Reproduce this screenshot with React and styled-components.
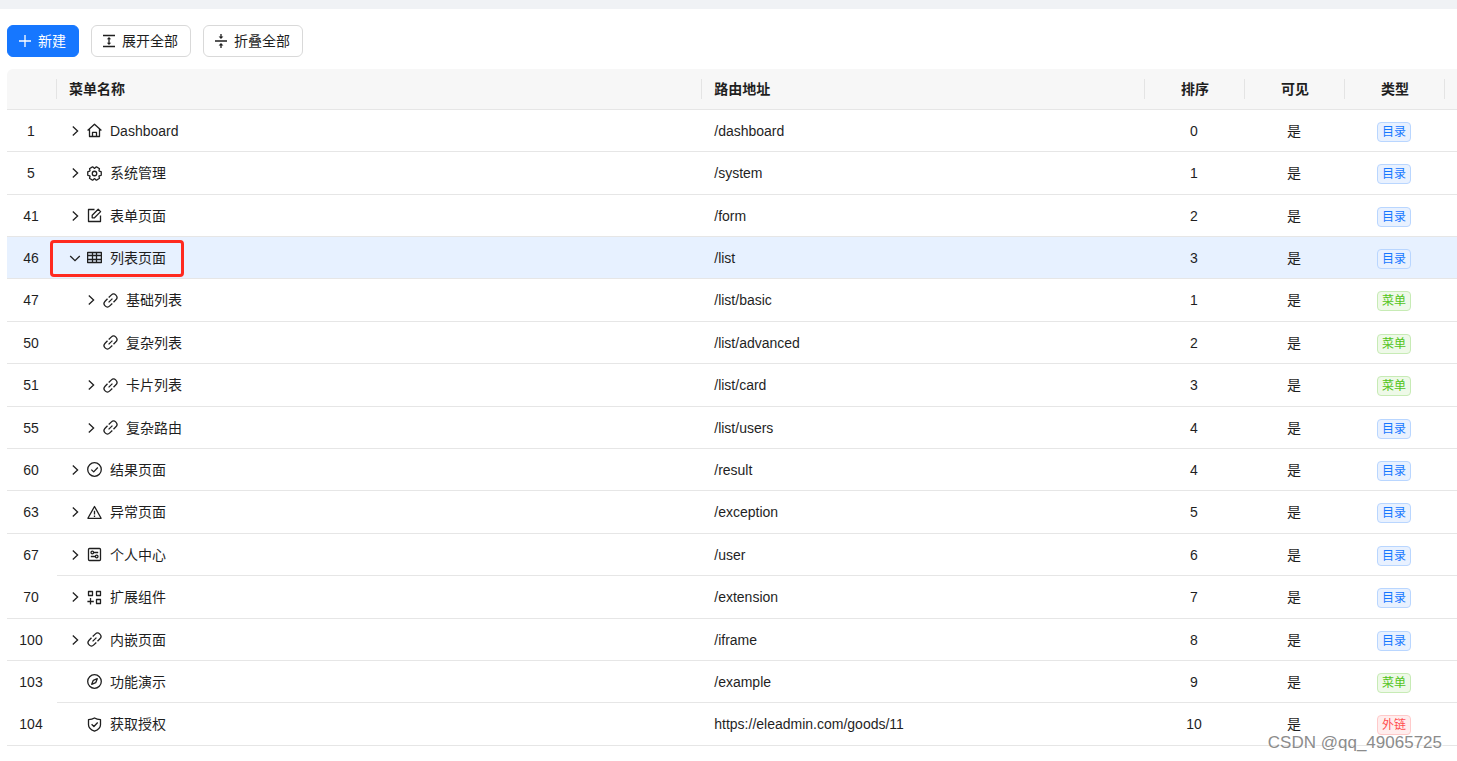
import styled, { createGlobalStyle, css } from "styled-components";

const menus = [
  { id: 1, icon: "home", title: "Dashboard", path: "/dashboard", sort: 0, type: "dir", arrow: "right" },
  { id: 5, icon: "setting", title: "系统管理", path: "/system", sort: 1, type: "dir", arrow: "right" },
  { id: 41, icon: "edit", title: "表单页面", path: "/form", sort: 2, type: "dir", arrow: "right" },
  { id: 46, icon: "table", title: "列表页面", path: "/list", sort: 3, type: "dir", arrow: "down", active: true },
  { id: 47, icon: "link", title: "基础列表", path: "/list/basic", sort: 1, type: "menu", arrow: "right", level: 1 },
  { id: 50, icon: "link", title: "复杂列表", path: "/list/advanced", sort: 2, type: "menu", level: 1 },
  { id: 51, icon: "link", title: "卡片列表", path: "/list/card", sort: 3, type: "menu", arrow: "right", level: 1 },
  { id: 55, icon: "link", title: "复杂路由", path: "/list/users", sort: 4, type: "dir", arrow: "right", level: 1 },
  { id: 60, icon: "check", title: "结果页面", path: "/result", sort: 4, type: "dir", arrow: "right" },
  { id: 63, icon: "warning", title: "异常页面", path: "/exception", sort: 5, type: "dir", arrow: "right" },
  { id: 67, icon: "control", title: "个人中心", path: "/user", sort: 6, type: "dir", arrow: "right", noLine: true },
  { id: 70, icon: "apps", title: "扩展组件", path: "/extension", sort: 7, type: "dir", arrow: "right" },
  { id: 100, icon: "link", title: "内嵌页面", path: "/iframe", sort: 8, type: "dir", arrow: "right" },
  { id: 103, icon: "compass", title: "功能演示", path: "/example", sort: 9, type: "menu", noLine: true },
  { id: 104, icon: "shield", title: "获取授权", path: "https://eleadmin.com/goods/11", sort: 10, type: "outer" },
];

const types = {
  dir: { text: "目录", color: "#1677ff", bg: "#e8f1ff", border: "#b9d6ff" },
  menu: { text: "菜单", color: "#52c41a", bg: "#eef9e8", border: "#c7ebb5" },
  outer: { text: "外链", color: "#ff4d4f", bg: "#ffeded", border: "#ffcaca" },
};

const icons = {
  home: (
    <>
      <path d="M.6 7.6 7.5 1.2l6.900 6.400M2.500 6v7.500h10V6" />
      <path d="M5.500 13.500V9.400h4v4.100" />
    </>
  ),
  edit: (
    <>
      <path d="M7.500 1.500h-6v12h12v-6" />
      <path d="M5.200 9.800V7.300l6-6 2.400 2.300-6.100 6.200z" />
    </>
  ),
  table: (
    <path d="M.6 2.500h13.800v10H.6zM.6 5.500h13.800M.6 9.500h13.800M5.500 2.500v10M9.500 2.500v10" />
  ),
  link: (
    <>
      <path d="M5.700 4.500 8.200 2.100a3.300 3.300 0 0 1 4.700 4.700l-2.400 2.500" />
      <path d="M4.500 5.700 2.100 8.200a3.300 3.300 0 0 0 4.700 4.700l2.500-2.400" />
      <path d="m5.600 9.400 3.800-3.800" />
    </>
  ),
  check: (
    <>
      <circle cx="7.500" cy="7.500" r="6.800" />
      <path d="m4.300 7.600 2.400 2.300 4.100-4.400" />
    </>
  ),
  warning: (
    <>
      <path d="M7.500 1.500.9 13.300h13.200z" />
      <path d="M7.500 5.800v3.600M7.500 10.600v1.300" />
    </>
  ),
  control: (
    <>
      <rect x="1.500" y="1.500" width="12" height="12" rx="1" />
      <path d="M6.800 5.500h4.400M3.800 9.500h4.400" />
      <circle cx="5.300" cy="5.500" r="1.300" />
      <circle cx="9.700" cy="9.500" r="1.300" />
    </>
  ),
  apps: (
    <path d="M1.500 1.500h4v4h-4zM9.500 1.500h4v4h-4zM9.500 9.500h4v4h-4zM3.500 8v6.400M.4 11.500h6.400" />
  ),
  compass: (
    <>
      <circle cx="7.500" cy="7.500" r="6.800" />
      <path d="M10.300 4.700 8.700 8.700 4.700 10.300 6.300 6.300z" />
    </>
  ),
  shield: (
    <>
      <path d="M7.500 1C5.700 2.200 3.800 2.600 1.500 2.700v5c0 3.100 2.500 5 6 6.500 3.500-1.500 6-3.400 6-6.500v-5C11.200 2.600 9.300 2.200 7.500 1z" />
      <path d="m4.600 7.300 2.300 2.200 3.800-4" />
    </>
  ),
};

const MenuIcon = ({ name }) => {
  if (name === "setting") {
    return (
      <Icon viewBox="4 4 40 40" $stroke={3.4}>
        <path
          transform="rotate(30 24 24)"
          d="M18.797 6.732A1 1 0 0 1 19.760 6h8.480a1 1 0 0 1 .964.732l1.285 4.628a1 1 0 0 0 1.213.700l4.651-1.200a1 1 0 0 1 1.116.468l4.240 7.344a1 1 0 0 1-.153 1.200L38.193 23.300a1 1 0 0 0 0 1.402l3.364 3.427a1 1 0 0 1 .153 1.200l-4.240 7.344a1 1 0 0 1-1.116.468l-4.650-1.200a1 1 0 0 0-1.214.700l-1.285 4.628a1 1 0 0 1-.964.732h-8.480a1 1 0 0 1-.963-.732L17.510 36.640a1 1 0 0 0-1.213-.700l-4.650 1.200a1 1 0 0 1-1.116-.468l-4.240-7.344a1 1 0 0 1 .153-1.200L9.809 24.700a1 1 0 0 0 0-1.402l-3.364-3.427a1 1 0 0 1-.153-1.200l4.240-7.344a1 1 0 0 1 1.116-.468l4.650 1.200a1 1 0 0 0 1.213-.700z"
        />
        <circle cx="24" cy="24" r="6" />
      </Icon>
    );
  }
  return <Icon viewBox="0 0 15 15">{icons[name]}</Icon>;
};

const MenuRow = ({ item }) => {
  const type = types[item.type];
  return (
    <Row $active={item.active}>
      <Cell $center $noLine={item.noLine}>
        {item.id}
      </Cell>
      <Cell>
        <NameBox $level={item.level || 0}>
          {item.arrow ? (
            <ArrowButton
              type="button"
              aria-label={item.title}
              aria-expanded={item.arrow === "down"}
            >
              <svg width="12" height="12" viewBox="0 0 12 12">
                <path
                  d={item.arrow === "down" ? "m1.200 4 4.800 4.600L10.800 4" : "m3.800 1.500 4.800 4.500-4.800 4.500"}
                />
              </svg>
            </ArrowButton>
          ) : (
            <ArrowSpace />
          )}
          <MenuIcon name={item.icon} />
          <span>{item.title}</span>
          {item.active && <Mark />}
        </NameBox>
      </Cell>
      <Cell>{item.path}</Cell>
      <Cell $center>{item.sort}</Cell>
      <Cell $center>是</Cell>
      <Cell $center>
        <Tag $color={type.color} $bg={type.bg} $border={type.border}>
          {type.text}
        </Tag>
      </Cell>
      <Cell />
    </Row>
  );
};

const App = () => {
  return (
    <Page>
      <GlobalStyle />
      <Content>
        <Toolbar>
          <Button type="button" $primary>
            <svg width="14" height="14" viewBox="0 0 14 14">
              <path d="M7 1v12M1 7h12" />
            </svg>
            新建
          </Button>
          <Button type="button">
            <svg width="14" height="14" viewBox="0 0 14 14">
              <path d="M1 1.500h12M1 12.500h12M7 4v6" />
              <path d="M4.800 5.300 7 3l2.200 2.300zM4.800 8.700 7 11l2.200-2.300z" fill="currentColor" stroke="none" />
            </svg>
            展开全部
          </Button>
          <Button type="button">
            <svg width="14" height="14" viewBox="0 0 14 14">
              <path d="M1 7h12M7 0v4M7 10v4" />
              <path d="M4.600 2.600 7 5l2.400-2.400zM4.600 11.400 7 9l2.400 2.400z" fill="currentColor" stroke="none" />
            </svg>
            折叠全部
          </Button>
        </Toolbar>
        <Table>
          <colgroup>
            <Col $width="50px" />
            <Col $width="44.5%" />
            <Col />
            <Col $width="100px" />
            <Col $width="100px" />
            <Col $width="100px" />
            <Col $width="12px" />
          </colgroup>
          <thead>
            <tr>
              <HeadCell />
              <HeadCell>菜单名称</HeadCell>
              <HeadCell>路由地址</HeadCell>
              <HeadCell $center>排序</HeadCell>
              <HeadCell $center>可见</HeadCell>
              <HeadCell $center>类型</HeadCell>
              <HeadCell $last />
            </tr>
          </thead>
          <tbody>
            {menus.map((item) => (
              <MenuRow key={item.id} item={item} />
            ))}
          </tbody>
        </Table>
      </Content>
      <Watermark>CSDN @qq_49065725</Watermark>
    </Page>
  );
};
export default App;

const GlobalStyle = createGlobalStyle`
  * {
    box-sizing: border-box;
  }
  body {
    margin: 0;
    background: #fff;
    color: #1f1f1f;
    font-family: "Liberation Sans", "Noto Sans CJK SC", sans-serif;
    font-size: 14px;
    line-height: 20px;
  }
`;

const Page = styled.div`
  position: relative;
  min-height: 100vh;
  border-top: 9px solid #f0f2f5;
`;

const Content = styled.div`
  padding: 16px 0 0 7px;
`;

const Toolbar = styled.div`
  display: flex;
  gap: 12px;
  margin-bottom: 12px;
`;

const Button = styled.button`
  display: flex;
  align-items: center;
  gap: 6px;
  height: 32px;
  padding: 0 12px 0 10px;
  border: 1px solid #d9d9d9;
  border-radius: 6px;
  background: #fff;
  color: #1f1f1f;
  font: inherit;
  cursor: pointer;
  svg {
    fill: none;
    stroke: currentColor;
    stroke-width: 1.3;
  }
  ${({ $primary }) =>
    $primary &&
    css`
      border-color: #1677ff;
      background: #1677ff;
      color: #fff;
    `}
`;

const Table = styled.table`
  width: 100%;
  table-layout: fixed;
  border-collapse: separate;
  border-spacing: 0;
`;

const Col = styled.col`
  width: ${({ $width }) => $width || "auto"};
`;

const HeadCell = styled.th`
  height: 41px;
  padding: 0 ${({ $last }) => ($last ? "0" : "12px")};
  border-bottom: 1px solid #e6e6e6;
  background: #f7f7f7;
  text-align: ${({ $center }) => ($center ? "center" : "left")};
  font-weight: 700;
  ${({ $last }) =>
    !$last &&
    css`
      background: #f7f7f7 linear-gradient(#e4e4e4, #e4e4e4) no-repeat right
        center / 1px 20px;
    `}
  &:first-child {
    border-top-left-radius: 6px;
  }
`;

const Cell = styled.td`
  height: 42px;
  padding: ${({ $center }) => ($center ? "0 2px 0 0" : "0 12px")};
  border-bottom: 1px solid ${({ $noLine }) => ($noLine ? "transparent" : "#e6e6e6")};
  text-align: ${({ $center }) => ($center ? "center" : "left")};
  &:last-child {
    padding: 0;
  }
`;

const Row = styled.tr`
  background: ${({ $active }) => ($active ? "#e7f1ff" : "transparent")};
  &:nth-child(5n + 2) ${Cell}, &:nth-child(5n) ${Cell} {
    height: 43px;
  }
`;

const NameBox = styled.div`
  position: relative;
  display: flex;
  align-items: center;
  padding-left: ${({ $level }) => $level * 16}px;
`;

const ArrowButton = styled.button`
  display: flex;
  width: 12px;
  margin-right: 6px;
  padding: 0;
  border: 0;
  background: none;
  color: inherit;
  cursor: pointer;
  svg {
    fill: none;
    stroke: currentColor;
    stroke-width: 1.3;
  }
`;

const ArrowSpace = styled.span`
  width: 12px;
  margin-right: 6px;
`;

const Icon = styled.svg`
  width: 15px;
  height: 15px;
  margin-right: 8px;
  fill: none;
  stroke: currentColor;
  stroke-width: ${({ $stroke }) => $stroke || 1.3};
  stroke-linejoin: round;
`;

/* frame around the opened menu */
const Mark = styled.span`
  position: absolute;
  top: -8px;
  left: -19px;
  width: 134px;
  height: 37px;
  border: 3px solid #ff2a1f;
  border-radius: 4px;
  pointer-events: none;
`;

const Tag = styled.span`
  display: inline-block;
  height: 20px;
  margin-top: 2px;
  padding: 0 4px;
  border: 1px solid ${({ $border }) => $border};
  border-radius: 4px;
  background: ${({ $bg }) => $bg};
  color: ${({ $color }) => $color};
  font-size: 12px;
  line-height: 18px;
  vertical-align: middle;
`;

const Watermark = styled.div`
  position: absolute;
  right: 15px;
  bottom: 8px;
  color: #8c8c8c;
  font-size: 17px;
  text-shadow: 1px 1px 0 #fff;
`;
